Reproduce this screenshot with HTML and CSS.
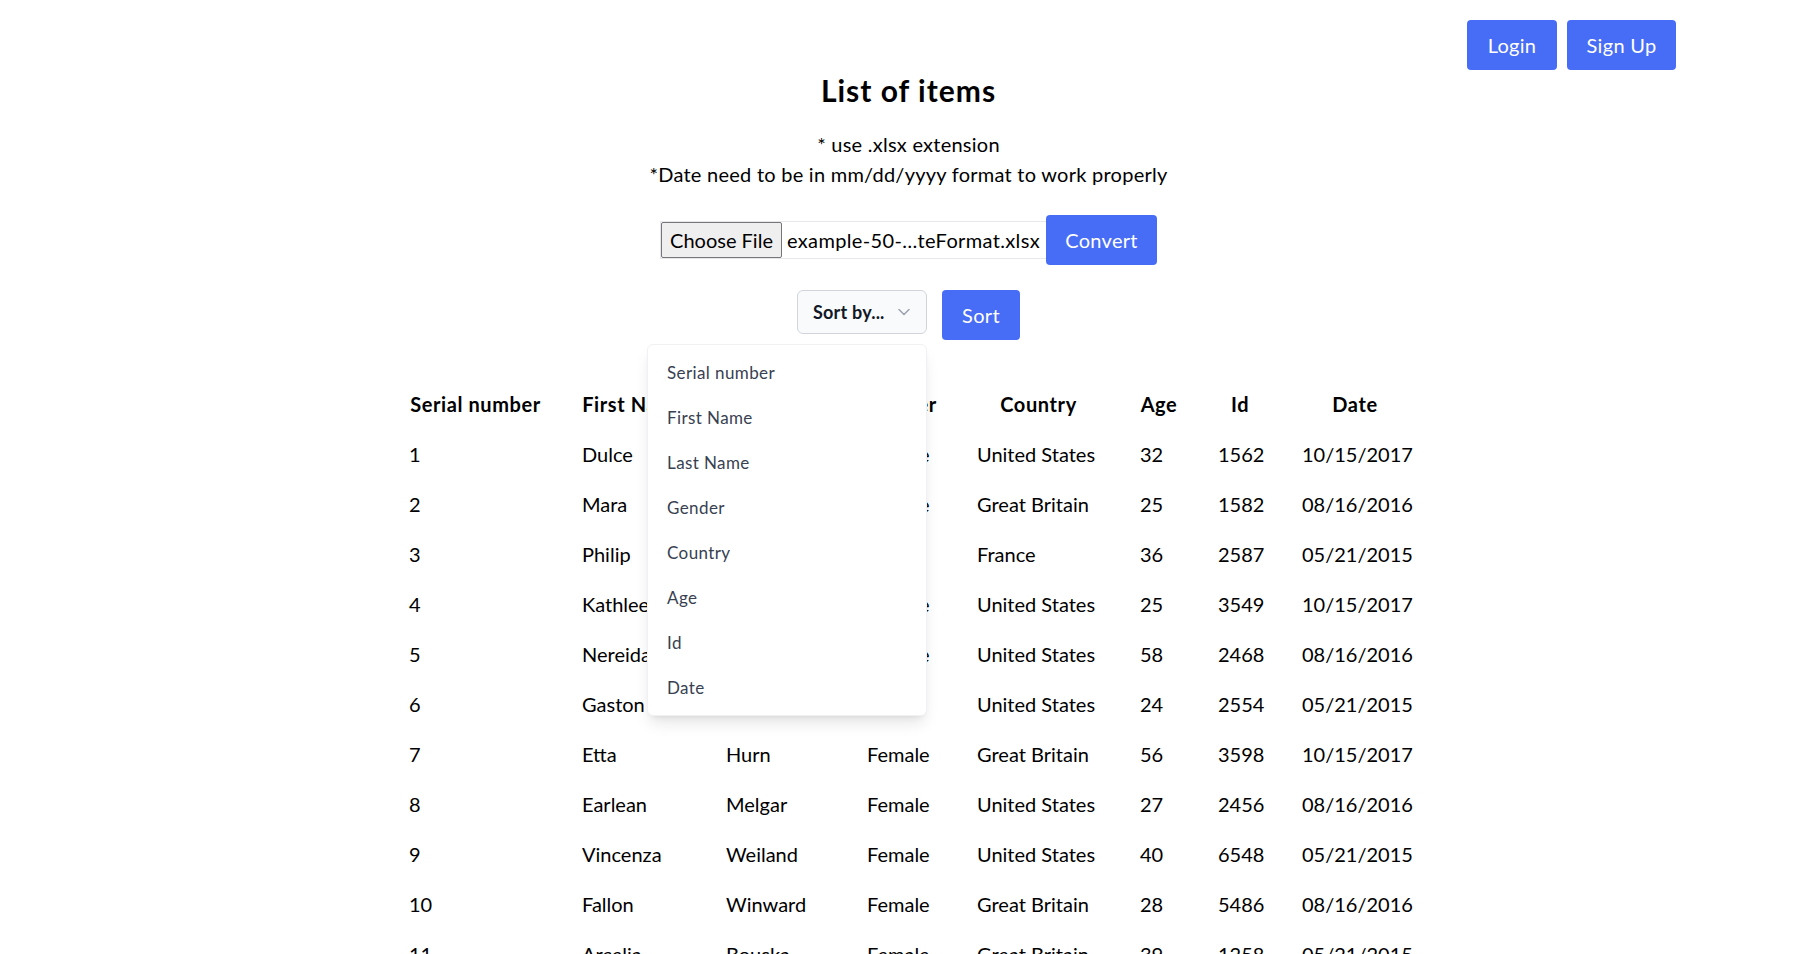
FILE: index.html
```html
<!DOCTYPE html>
<html lang="en">
<head>
<meta charset="utf-8">
<title>List of items</title>
<link rel="stylesheet" href="styles.css">
</head>
<body>
<header class="topbar">
  <button class="btn btn-login">Login</button>
  <button class="btn btn-signup">Sign Up</button>
</header>
<main class="main">
  <h1 class="title">List of items</h1>
  <div class="notes">
    <p>* use .xlsx extension</p>
    <p>*Date need to be in mm/dd/yyyy format to work properly</p>
  </div>
  <div class="file-row">
    <div class="file-input">
      <span class="file-btn">Choose File</span>
      <span class="file-name">example-50-…teFormat.xlsx</span>
    </div>
    <button class="btn btn-convert">Convert</button>
  </div>
  <div class="sort-row">
    <div class="select-wrap">
      <div class="select">
        <span class="select-label">Sort by...</span>
        <svg class="chevron" width="12" height="8" viewBox="0 0 12 8"><polyline points="1,1.5 6,6.5 11,1.5" fill="none" stroke="#9ca3af" stroke-width="1.5" stroke-linecap="round" stroke-linejoin="round"/></svg>
      </div>
      <ul class="menu">
        <li>Serial number</li>
        <li>First Name</li>
        <li>Last Name</li>
        <li>Gender</li>
        <li>Country</li>
        <li>Age</li>
        <li>Id</li>
        <li>Date</li>
      </ul>
    </div>
    <button class="btn btn-sort">Sort</button>
  </div>
  <table class="data">
    <colgroup>
      <col class="c1"><col class="c2"><col class="c3"><col class="c4"><col class="c5"><col class="c6"><col class="c7"><col class="c8">
    </colgroup>
    <thead>
      <tr><th>Serial number</th><th>First Name</th><th>Last Name</th><th>Gender</th><th>Country</th><th>Age</th><th>Id</th><th>Date</th></tr>
    </thead>
    <tbody>
      <tr><td>1</td><td>Dulce</td><td>Abril</td><td>Female</td><td>United States</td><td>32</td><td>1562</td><td>10/15/2017</td></tr>
      <tr><td>2</td><td>Mara</td><td>Hashimoto</td><td>Female</td><td>Great Britain</td><td>25</td><td>1582</td><td>08/16/2016</td></tr>
      <tr><td>3</td><td>Philip</td><td>Gent</td><td>Male</td><td>France</td><td>36</td><td>2587</td><td>05/21/2015</td></tr>
      <tr><td>4</td><td>Kathleen</td><td>Hanner</td><td>Female</td><td>United States</td><td>25</td><td>3549</td><td>10/15/2017</td></tr>
      <tr><td>5</td><td>Nereida</td><td>Magwood</td><td>Female</td><td>United States</td><td>58</td><td>2468</td><td>08/16/2016</td></tr>
      <tr><td>6</td><td>Gaston</td><td>Brumm</td><td>Male</td><td>United States</td><td>24</td><td>2554</td><td>05/21/2015</td></tr>
      <tr><td>7</td><td>Etta</td><td>Hurn</td><td>Female</td><td>Great Britain</td><td>56</td><td>3598</td><td>10/15/2017</td></tr>
      <tr><td>8</td><td>Earlean</td><td>Melgar</td><td>Female</td><td>United States</td><td>27</td><td>2456</td><td>08/16/2016</td></tr>
      <tr><td>9</td><td>Vincenza</td><td>Weiland</td><td>Female</td><td>United States</td><td>40</td><td>6548</td><td>05/21/2015</td></tr>
      <tr><td>10</td><td>Fallon</td><td>Winward</td><td>Female</td><td>Great Britain</td><td>28</td><td>5486</td><td>08/16/2016</td></tr>
      <tr><td>11</td><td>Arcelia</td><td>Bouska</td><td>Female</td><td>Great Britain</td><td>39</td><td>1258</td><td>05/21/2015</td></tr>
      <tr><td>12</td><td>Franklyn</td><td>Unknow</td><td>Male</td><td>United States</td><td>38</td><td>2579</td><td>10/15/2017</td></tr>
      <tr><td>13</td><td>Sherron</td><td>Ascencio</td><td>Female</td><td>Great Britain</td><td>47</td><td>3256</td><td>08/16/2016</td></tr>
    </tbody>
  </table>
</main>
</body>
</html>
```
FILE: styles.css
```css
* { box-sizing: border-box; }

html, body {
  margin: 0;
  padding: 0;
  background: #ffffff;
}

body {
  font-family: "Lato", "Noto Sans", sans-serif;
  color: #000000;
  font-size: 20px;
}

.btn {
  font-family: inherit;
  font-size: 20px;
  line-height: 28px;
  letter-spacing: 0.3px;
  color: #ffffff;
  background: #476cf6;
  border: none;
  border-radius: 4px;
  height: 50px;
  padding: 0;
  cursor: pointer;
}

.topbar {
  display: flex;
  justify-content: flex-end;
  gap: 10px;
  padding: 20px 141px 0 0;
}

.btn-login { width: 90px; }
.btn-signup { width: 109px; }

.main {
  display: flex;
  flex-direction: column;
  align-items: center;
}

.title {
  margin: 2px 0 0;
  font-size: 30px;
  line-height: 36px;
  font-weight: 700;
  letter-spacing: 1px;
}

.notes {
  margin-top: 21px;
  text-align: center;
}

.notes p {
  margin: 0;
  font-size: 20px;
  line-height: 30px;
  letter-spacing: 0.25px;
}

.file-row {
  margin-top: 26px;
  display: flex;
  align-items: center;
}

.file-input {
  display: flex;
  align-items: center;
  width: 386px;
  height: 38px;
  border: 1px solid #e5e7eb;
  border-right: none;
  overflow: hidden;
  white-space: nowrap;
}

.file-btn {
  display: flex;
  align-items: center;
  justify-content: center;
  width: 121px;
  height: 36px;
  background: #efefef;
  border: 1px solid #767676;
  border-radius: 2px;
  font-size: 20px;
  color: #000;
  flex-shrink: 0;
}

.file-name {
  margin-left: 5px;
  font-size: 20px;
  letter-spacing: 0.35px;
}

.btn-convert { width: 111px; }

.sort-row {
  margin-top: 25px;
  display: flex;
  align-items: flex-start;
  gap: 15px;
}

.select-wrap {
  position: relative;
}

.select {
  display: flex;
  align-items: center;
  justify-content: space-between;
  width: 130px;
  height: 44px;
  padding: 0 16px 0 15px;
  background: #f9fafb;
  border: 1px solid #d1d5db;
  border-radius: 6px;
}

.select-label {
  font-size: 18px;
  font-weight: 700;
  color: #111827;
  letter-spacing: 0.2px;
}

.chevron { display: block; }

.menu {
  position: absolute;
  top: 54px;
  right: 0;
  width: 280px;
  margin: 0;
  padding: 5px 0;
  list-style: none;
  background: #ffffff;
  border: 1px solid #f0f1f3;
  border-radius: 6px;
  box-shadow: 0 10px 15px -3px rgba(0,0,0,0.1), 0 4px 6px -4px rgba(0,0,0,0.1);
  z-index: 10;
}

.menu li {
  height: 45px;
  display: flex;
  align-items: center;
  padding-left: 19px;
  font-size: 17px;
  letter-spacing: 0.4px;
  color: #374151;
}

.btn-sort { width: 78px; }

.data {
  margin-top: 39px;
  width: 1039px;
  table-layout: fixed;
  border-collapse: collapse;
}

.c1 { width: 173px; }
.c2 { width: 144px; }
.c3 { width: 141px; }
.c4 { width: 110px; }
.c5 { width: 163px; }
.c6 { width: 78px; }
.c7 { width: 84px; }
.c8 { width: 146px; }

.data th,
.data td {
  padding: 11px 20px;
  line-height: 28px;
  font-size: 20px;
  white-space: nowrap;
}

.data th {
  font-weight: 700;
  text-align: center;
  letter-spacing: 0.6px;
}

.data td {
  text-align: left;
}
```
